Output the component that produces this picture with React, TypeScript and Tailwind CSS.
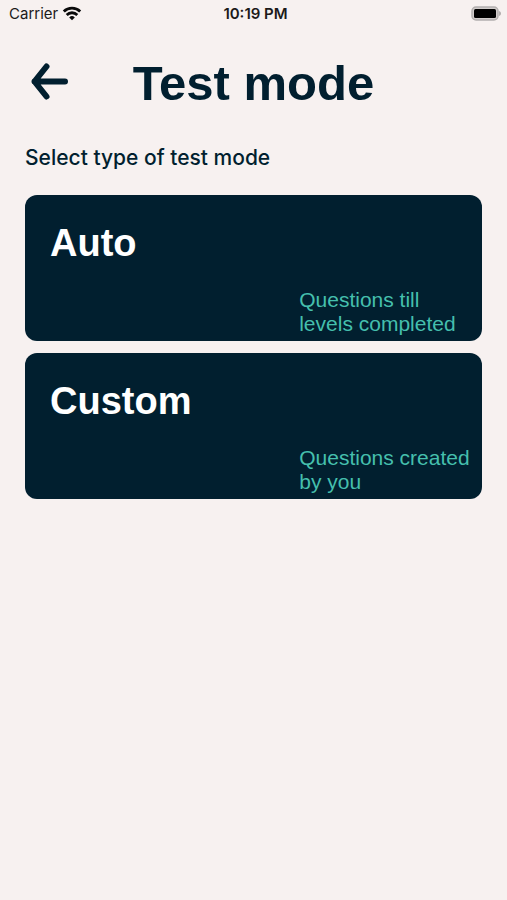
const modes = [
  { title: "Auto", description: "Questions till levels completed" },
  { title: "Custom", description: "Questions created by you" },
];

function WifiIcon() {
  return (
    <svg className="h-4 w-5" viewBox="0 0 20 16" fill="none" stroke="#0a0a0a" strokeWidth="2.8" aria-hidden="true">
      <path d="M1.8 5.4a11.8 11.8 0 0 1 16.4 0" />
      <path d="M4.7 8.9a7.6 7.6 0 0 1 10.6 0" />
      <path d="M7.2 11.4a4 4 0 0 1 5.6 0L10 14.2z" fill="#0a0a0a" stroke="none" />
    </svg>
  );
}

function BatteryIcon() {
  return (
    <svg className="h-4 w-8" viewBox="0 0 32 16" aria-hidden="true">
      <rect x="2" y="1" width="26" height="13" rx="4" fill="#d2cdcc" stroke="#b3afae" strokeWidth="1.5" />
      <rect x="4" y="3" width="22" height="9" rx="1.5" fill="#000" />
      <path d="M29 5c1.5.5 2 1.4 2 2.5s-.5 2-2 2.5z" fill="#b3afae" />
    </svg>
  );
}

function BackIcon() {
  return (
    <svg
      className="h-10 w-10"
      viewBox="0 0 40 40"
      fill="none"
      stroke="currentColor"
      strokeWidth="6"
      strokeLinecap="round"
      strokeLinejoin="round"
      aria-hidden="true"
    >
      <path d="M17.500 4.500 5.500 19.500l12 15M5.500 19.500H36" />
    </svg>
  );
}

export default function App() {
  return (
    <div className="min-h-screen bg-[#f7f1f0] font-['Liberation_Sans',Arial,sans-serif] text-[#011f2f]">
      <div className="grid h-7 grid-cols-[1fr_auto_1fr] items-center pr-[5px] pl-[9px] font-['Inter',sans-serif] text-[15px] text-[#1c1a1a]">
        <div className="flex items-center gap-1">
          <span>Carrier</span>
          <WifiIcon />
        </div>
        <span className="text-center font-semibold">10:19 PM</span>
        <div className="flex justify-end">
          <BatteryIcon />
        </div>
      </div>

      <main className="px-[25px]">
        <header className="grid h-27 grid-cols-[44px_1fr_44px] items-center">
          <button type="button" aria-label="Back" className="flex justify-end">
            <BackIcon />
          </button>
          <h1 className="pt-px text-center text-[49px] leading-12 font-bold">Test mode</h1>
        </header>

        <p className="h-[59px] pt-2 font-['Inter',sans-serif] text-[21px] leading-7 font-medium">
          Select type of test mode
        </p>

        <div className="flex flex-col gap-3">
          {modes.map((mode) => (
            <button
              key={mode.title}
              type="button"
              className="flex h-[146px] flex-col justify-between rounded-xl bg-[#011f2f] pt-6 pb-[5px] text-left"
            >
              <span className="pl-[25px] text-[38px] leading-12 font-bold text-white">{mode.title}</span>
              <span className="w-2/5 self-end pr-2 text-[21px] leading-6 text-[#45bfad]">{mode.description}</span>
            </button>
          ))}
        </div>
      </main>
    </div>
  );
}
